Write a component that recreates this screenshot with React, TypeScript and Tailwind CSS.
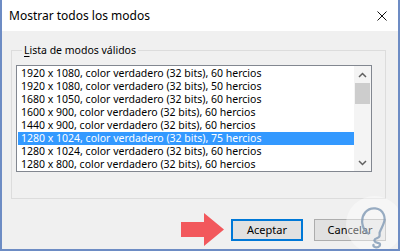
import React from 'react'

const modes = [
  '1920 x 1080, color verdadero (32 bits), 60 hercios',
  '1920 x 1080, color verdadero (32 bits), 50 hercios',
  '1680 x 1050, color verdadero (32 bits), 60 hercios',
  '1600 x 900, color verdadero (32 bits), 60 hercios',
  '1440 x 900, color verdadero (32 bits), 60 hercios',
  '1280 x 1024, color verdadero (32 bits), 75 hercios',
  '1280 x 1024, color verdadero (32 bits), 60 hercios',
  '1280 x 800, color verdadero (32 bits), 60 hercios',
]

const selected = 5

export default function App() {
  return (
    <div className="relative w-[400px] h-[251px] flex flex-col border-x-2 border-b-2 border-[#6d8cc4] bg-[#f0f0f0] font-['Noto_Sans',sans-serif] text-black overflow-hidden">
      {/* title bar */}
      <div className="h-[31px] bg-white flex items-center justify-between pl-[7px] pr-[11px] shrink-0">
        <span className="text-[12px]">Mostrar todos los modos</span>
        <svg width="10" height="10" viewBox="0 0 10 10" className="mt-[1px]">
          <path d="M0.5 0.5 L9.5 9.5 M9.5 0.5 L0.5 9.5" stroke="#111" strokeWidth="1" />
        </svg>
      </div>

      {/* body */}
      <div className="flex-1 flex flex-col pl-[9px] pr-[12px]">
        <fieldset className="mt-[12px] h-[156px] border border-[#dcdcdc] pl-[4px] pr-[13px]">
          <legend className="ml-[6px] px-[2px] text-[10.5px] leading-[14px]">
            <span className="underline underline-offset-2">L</span>ista de modos válidos
          </legend>
          <div className="mt-[8px] h-[107px] border border-[#828790] bg-white flex">
            <div className="flex-1 pt-[1px] pl-[1px]">
              {modes.map((m, i) => (
                <div
                  key={i}
                  className={`h-[13px] leading-[13px] pl-[3px] text-[10.5px] whitespace-nowrap ${
                    i === selected ? 'bg-[#3399ff] text-white' : ''
                  }`}
                >
                  {m}
                </div>
              ))}
            </div>
            <div className="w-[17px] bg-[#f4f4f4] flex flex-col items-center">
              <svg width="9" height="6" viewBox="0 0 9 6" className="mt-[6px]">
                <path d="M1 5 L4.5 1.5 L8 5" stroke="#606060" strokeWidth="1.5" fill="none" />
              </svg>
              <div className="mt-[5px] w-[15px] h-[21px] bg-[#cdcdcd]" />
              <div className="flex-1" />
              <svg width="9" height="6" viewBox="0 0 9 6" className="mb-[5px]">
                <path d="M1 1 L4.5 4.5 L8 1" stroke="#606060" strokeWidth="1.5" fill="none" />
              </svg>
            </div>
          </div>
        </fieldset>

        {/* buttons */}
        <div className="mt-[14px] flex items-center justify-end gap-[11px]">
          <svg width="43" height="33" viewBox="0 0 43 33" className="mr-[-4px]">
            <path d="M0 9 H23 V0 L43 16.5 L23 33 V24 H0 Z" fill="#f2585c" />
          </svg>
          <button className="w-[72px] h-[22px] border-2 border-[#0078d7] bg-[#e1e1e1] text-[11px] leading-none">
            Aceptar
          </button>
          <button className="w-[72px] h-[22px] border border-[#adadad] bg-[#e1e1e1] text-[11px] leading-none">
            Cancelar
          </button>
        </div>
      </div>

      {/* watermark */}
      <div className="absolute left-[344px] top-[196px] w-[57px] h-[57px] rounded-full bg-white/40 pointer-events-none">
        <svg width="57" height="57" viewBox="0 0 56 56">
          <path
            d="M22 37 C15 32 14 22 19 16 C24 10 34 11 37 18 C40 25 35 30 33 36 L33 39 C33 42 27 41 28 44 C29 47 35 45 33 49 C31 52 26 50 27 48"
            stroke="#7f98b4"
            strokeWidth="2.2"
            fill="none"
            strokeLinecap="round"
            opacity="0.8"
          />
        </svg>
      </div>
    </div>
  )
}
